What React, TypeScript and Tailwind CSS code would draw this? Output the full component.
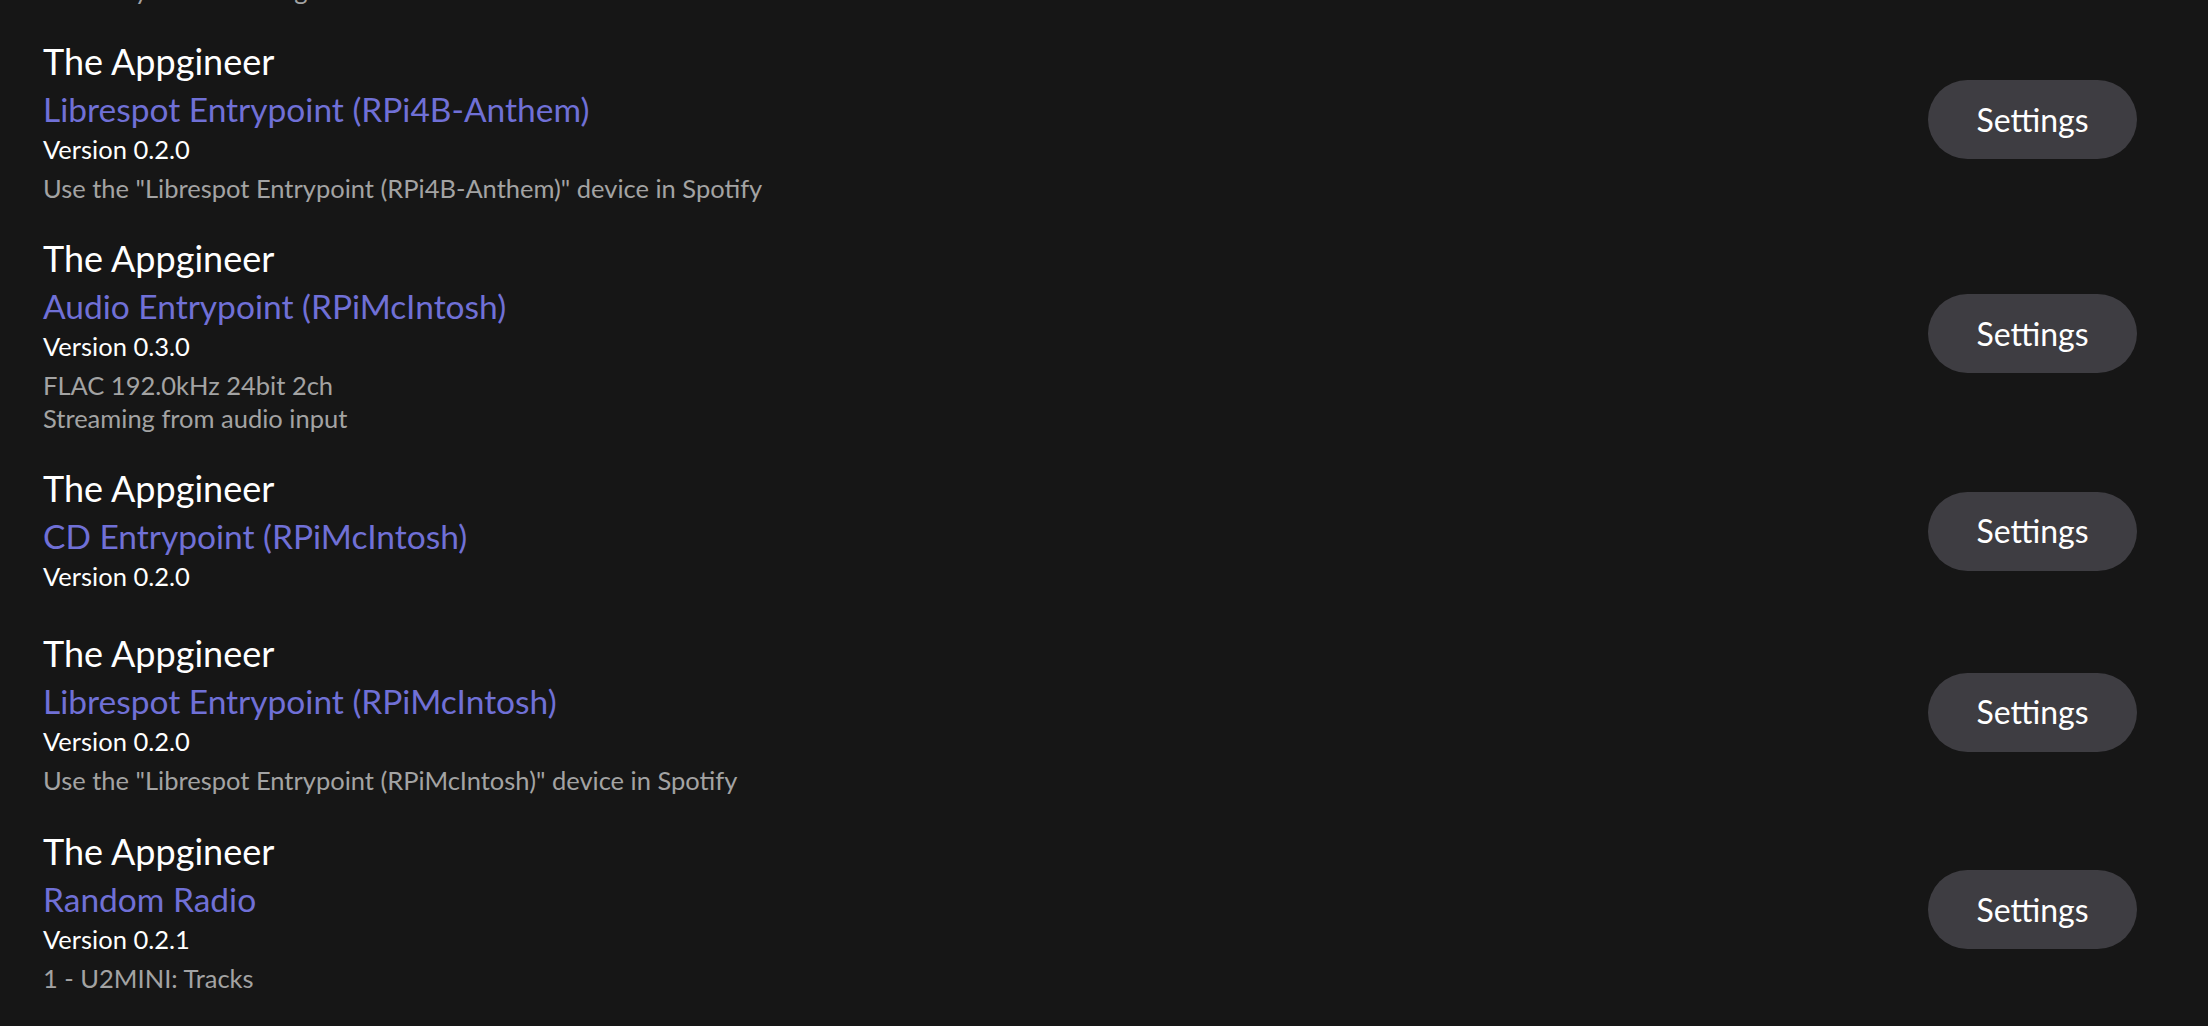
import React from "react";

type Ext = { author: string; name: string; version: string; desc: string[] };

const items: Ext[] = [
  { author: "The Appgineer", name: "Radio Entrypoint", version: "Version 0.1.0", desc: ["Currently not streaming"] },
  {
    author: "The Appgineer",
    name: "Librespot Entrypoint (RPi4B-Anthem)",
    version: "Version 0.2.0",
    desc: ['Use the "Librespot Entrypoint (RPi4B-Anthem)" device in Spotify'],
  },
  {
    author: "The Appgineer",
    name: "Audio Entrypoint (RPiMcIntosh)",
    version: "Version 0.3.0",
    desc: ["FLAC 192.0kHz 24bit 2ch", "Streaming from audio input"],
  },
  { author: "The Appgineer", name: "CD Entrypoint (RPiMcIntosh)", version: "Version 0.2.0", desc: [] },
  {
    author: "The Appgineer",
    name: "Librespot Entrypoint (RPiMcIntosh)",
    version: "Version 0.2.0",
    desc: ['Use the "Librespot Entrypoint (RPiMcIntosh)" device in Spotify'],
  },
  { author: "The Appgineer", name: "Random Radio", version: "Version 0.2.1", desc: ["1 - U2MINI: Tracks"] },
];

function Row({ e }: { e: Ext }) {
  return (
    <div className="flex items-center justify-between pt-[15px] pb-[14px]">
      <div className="flex flex-col">
        <div className="whitespace-nowrap text-[36px] leading-[51px] text-white">{e.author}</div>
        <div className="whitespace-nowrap text-[33.5px] leading-[44px] text-[#7070d6]">{e.name}</div>
        <div className="whitespace-nowrap text-[25.5px] leading-[36px] text-white">{e.version}</div>
        <div className="mt-[5px] flex flex-col text-[25.5px] leading-[32.5px] text-[#a3a3a3]">
          {e.desc.map((d, i) => (
            <div key={i} className="whitespace-nowrap">
              {d}
            </div>
          ))}
        </div>
      </div>
      <button className="flex h-[79px] w-[209px] items-center justify-center rounded-full bg-[#3e3d42] text-[32px] text-white">
        Settings
      </button>
    </div>
  );
}

export default function App() {
  return (
    <div
      className="h-[1026px] w-full overflow-hidden bg-[#161616] pl-[43px] pr-[71px]"
      style={{ fontFamily: "Lato, 'Noto Sans', sans-serif" }}
    >
      <div className="-mt-[177px] flex flex-col">
        {items.map((e, i) => (
          <Row key={i} e={e} />
        ))}
      </div>
    </div>
  );
}
